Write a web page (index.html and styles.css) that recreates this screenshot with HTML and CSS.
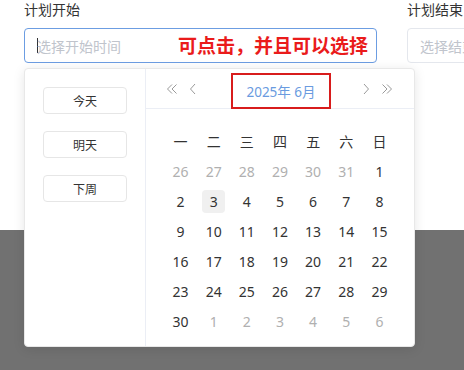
FILE: index.html
```html
<!DOCTYPE html>
<html lang="zh-CN">
<head>
    <meta charset="UTF-8">
    <meta name="viewport" content="width=device-width, initial-scale=1.0">
    <title>计划时间</title>
    <link rel="stylesheet" href="styles.css">
</head>
<body>

    <div class="top">
        <div class="form-row">
            <div class="field field-start">
                <label>计划开始</label>
                <div class="input focus">
                    <span class="caret"></span>
                    <span class="placeholder">选择开始时间</span>
                    <span class="note">可点击，并且可以选择</span>
                </div>
            </div>
            <div class="field field-end">
                <label>计划结束</label>
                <div class="input">
                    <span class="placeholder">选择结束时间</span>
                </div>
            </div>
        </div>

        <!-- date picker dropdown -->
        <div class="picker">
            <div class="sidebar">
                <button class="shortcut">今天</button>
                <button class="shortcut">明天</button>
                <button class="shortcut">下周</button>
            </div>
            <div class="cal">
                <div class="cal-head">
                    <div class="arrows">
                        <svg width="12" height="12" viewBox="0 0 12 12"><path d="M6 1.5 1.5 6 6 10.5M10.5 1.5 6 6 10.5 10.5" fill="none" stroke="#9a9a9a" stroke-width="1"/></svg>
                        <svg width="8" height="12" viewBox="0 0 8 12"><path d="M6 1 1.5 6 6 11" fill="none" stroke="#9a9a9a" stroke-width="1"/></svg>
                    </div>
                    <div class="title">2025年 6月</div>
                    <div class="arrows arrows-right">
                        <svg width="8" height="12" viewBox="0 0 8 12"><path d="M2 1 6.5 6 2 11" fill="none" stroke="#9a9a9a" stroke-width="1"/></svg>
                        <svg width="12" height="12" viewBox="0 0 12 12"><path d="M1.5 1.5 6 6 1.5 10.5M6 1.5 10.5 6 6 10.5" fill="none" stroke="#9a9a9a" stroke-width="1"/></svg>
                    </div>
                </div>
                <div class="grid" id="grid"></div>
            </div>
        </div>
    </div>
    <div class="mask"></div>

    <script>
        const weeks = ["一", "二", "三", "四", "五", "六", "日"];
        const grid = document.getElementById("grid");
        let html = "";

        for (let w of weeks) {
            html += `<div class="cell">${w}</div>`;
        }

        // may 26 .. july 6
        const days = [];
        for (let d = 26; d <= 31; d++) days.push({ n: d, other: true });
        for (let d = 1; d <= 30; d++) days.push({ n: d, other: false });
        for (let d = 1; d <= 6; d++) days.push({ n: d, other: true });

        for (let day of days) {
            let cls = "cell";
            if (day.other) cls += " other";
            if (!day.other && day.n === 3) cls += " today";
            html += `<div class="${cls}"><span>${day.n}</span></div>`;
        }

        grid.innerHTML = html;
    </script>

</body>
</html>
```

FILE: styles.css
```css
body {
    margin: 0;
    font-family: "Noto Sans", "Noto Sans CJK SC", sans-serif;
    color: #333;
    background: #717171;
}

.top {
    position: relative;
    height: 230px;
    background: #fff;
}

.form-row {
    display: flex;
    gap: 30px;
    padding-left: 24px;
}

.field label {
    display: block;
    height: 28px;
    font-size: 14px;
    line-height: 19px;
    color: #333;
}

.field-start {
    width: 353px;
    flex-shrink: 0;
}

.field-end {
    width: 200px;
    flex-shrink: 0;
}

.input {
    position: relative;
    display: flex;
    align-items: center;
    box-sizing: border-box;
    height: 35px;
    padding-left: 12px;
    border: 1px solid #e4e7ed;
    border-radius: 4px;
    font-size: 14px;
    white-space: nowrap;
}

.input.focus {
    border-color: #6c9de2;
}

.caret {
    width: 1px;
    height: 15px;
    background: #333;
    margin-right: -1px;
}

.placeholder {
    color: #c0c4cc;
}

.note {
    position: absolute;
    left: 153px;
    top: 5px;
    font-size: 19px;
    font-weight: bold;
    line-height: 24px;
    color: #ea1b1b;
}

.picker {
    position: absolute;
    left: 24px;
    top: 68px;
    width: 391px;
    height: 279px;
    box-sizing: border-box;
    display: flex;
    background: #fff;
    border: 1px solid #e8e8e8;
    border-radius: 4px;
    box-shadow: 0 2px 12px rgba(0, 0, 0, 0.1);
}

.sidebar {
    width: 120px;
    flex-shrink: 0;
    border-right: 1px solid #ebeef5;
    display: flex;
    flex-direction: column;
    align-items: center;
    gap: 17px;
    padding-top: 18px;
}

.shortcut {
    width: 84px;
    height: 27px;
    padding: 0;
    background: #fff;
    border: 1px solid #e6e6e6;
    border-radius: 4px;
    font-family: inherit;
    font-size: 12px;
    color: #333;
}

.cal {
    flex: 1;
}

.cal-head {
    height: 39px;
    border-bottom: 1px solid #ebeef5;
    display: flex;
    align-items: center;
    padding-left: 20px;
}

.arrows {
    display: flex;
    align-items: center;
    gap: 11px;
}

.title {
    width: 96px;
    height: 32px;
    border: 2px solid #d81c1c;
    display: flex;
    align-items: center;
    justify-content: center;
    font-size: 13.5px;
    color: #6a9be0;
    margin-top: 5px;
    margin-left: 34px;
}

.arrows-right {
    margin-left: 31px;
}

.grid {
    display: grid;
    grid-template-columns: repeat(7, 1fr);
    grid-auto-rows: 30px;
    padding: 17px 18px 0 18px;
}

.cell {
    display: flex;
    align-items: center;
    justify-content: center;
    font-size: 14px;
    color: #333;
}

.cell span {
    width: 23px;
    height: 23px;
    border-radius: 4px;
    display: flex;
    align-items: center;
    justify-content: center;
}

.cell.other {
    color: #b0b0b0;
}

.cell.today span {
    background: #f0f0f0;
}

.mask {
    height: 140px;
}
```
